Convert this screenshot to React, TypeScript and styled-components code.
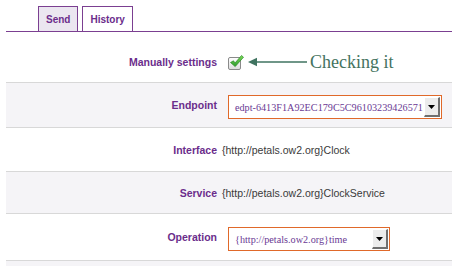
import React from 'react';
import styled, { createGlobalStyle } from 'styled-components';

const GlobalStyle = createGlobalStyle`
  html, body {
    margin: 0;
    padding: 0;
    background: #ffffff;
  }
  body {
    font-family: "Liberation Sans", Arial, sans-serif;
  }
`;

const PURPLE = '#6b2d8b';

const Page = styled.div`
  box-sizing: border-box;
  padding-left: 6px;
  width: 452px;
  height: 266px;
  overflow: hidden;
`;

const TabBar = styled.div`
  display: flex;
  align-items: flex-end;
  gap: 4px;
  height: 31px;
  padding-left: 32px;
  border-bottom: 1px solid #7b3f91;
`;

interface TabProps {
  active?: boolean;
}

const Tab = styled.div<TabProps>`
  box-sizing: border-box;
  height: 25px;
  padding: 0 7px;
  display: flex;
  align-items: center;
  border: 1px solid #7b3f91;
  border-bottom: none;
  background: ${(p) => (p.active ? '#ebe6f0' : '#ffffff')};
  color: ${PURPLE};
  font-size: 10px;
  font-weight: bold;
`;

interface RowProps {
  shaded?: boolean;
  height: number;
  padTop?: number;
}

const Row = styled.div<RowProps>`
  box-sizing: border-box;
  display: grid;
  grid-template-columns: 211px 1fr;
  column-gap: 5px;
  align-items: center;
  height: ${(p) => p.height}px;
  padding-top: ${(p) => p.padTop ?? 0}px;
  background: ${(p) => (p.shaded ? '#f5f4f7' : '#ffffff')};
  border-bottom: 1px solid #d8d8d8;
`;

const Label = styled.div`
  align-self: center;
  text-align: right;
  color: ${PURPLE};
  font-size: 10.5px;
  font-weight: bold;
`;

const Value = styled.div`
  display: flex;
  align-items: center;
  color: #3a3a3a;
  font-size: 10.5px;
  white-space: nowrap;
`;

interface SelectProps {
  width: number;
}

const FakeSelect = styled.div<SelectProps>`
  box-sizing: border-box;
  margin-left: 6px;
  margin-top: 4px;
  width: ${(p) => p.width}px;
  height: 24px;
  display: flex;
  align-items: center;
  justify-content: space-between;
  padding: 0 1px 0 6px;
  border: 1px solid #e0692a;
  background: #ffffff;
  color: #6a3a94;
  font-family: "Liberation Serif", "Times New Roman", serif;
  font-size: 10.2px;
  white-space: nowrap;
  overflow: hidden;
`;

const SelectButton = styled.span`
  box-sizing: border-box;
  flex-shrink: 0;
  width: 16px;
  height: 20px;
  display: flex;
  align-items: center;
  justify-content: center;
  background: #ececec;
  border-top: 1px solid #ffffff;
  border-left: 1px solid #ffffff;
  border-right: 2px solid #6f6f6f;
  border-bottom: 2px solid #6f6f6f;
`;

const Note = styled.span`
  margin-left: 2px;
  color: #44735f;
  font-family: "Liberation Serif", "Times New Roman", serif;
  font-size: 18px;
`;

function CheckIcon() {
  return (
    <svg width="18" height="18" viewBox="0 0 18 18">
      <defs>
        <linearGradient id="box" x1="0" y1="0" x2="0" y2="1">
          <stop offset="0" stopColor="#ffffff" />
          <stop offset="1" stopColor="#dcdcdc" />
        </linearGradient>
        <linearGradient id="tick" x1="0" y1="0" x2="0" y2="1">
          <stop offset="0" stopColor="#7fdc5a" />
          <stop offset="1" stopColor="#2c9a2a" />
        </linearGradient>
      </defs>
      <rect x="1.5" y="4.5" width="12" height="12" rx="1.5" fill="url(#box)" stroke="#8a8a8a" />
      <path
        d="M3.5 9.5 L6.5 7.8 L8 10 L14.5 2.5 L16.5 4.2 L8.2 13.6 Z"
        fill="url(#tick)"
        stroke="#2a8a28"
        strokeWidth="0.7"
        strokeLinejoin="round"
      />
    </svg>
  );
}

function Arrow() {
  return (
    <svg width="60" height="10" viewBox="0 0 60 10" style={{ marginLeft: 3 }}>
      <line x1="6" y1="5" x2="59" y2="5" stroke="#3f7360" strokeWidth="1.3" />
      <path d="M0 5 L9 0.8 L9 9.2 Z" fill="#3f7360" />
    </svg>
  );
}

function DropArrow() {
  return (
    <svg width="7" height="4" viewBox="0 0 7 4">
      <path d="M0 0 H7 L3.5 4 Z" fill="#000000" />
    </svg>
  );
}

export default function App() {
  return (
    <Page>
      <GlobalStyle />
      <TabBar>
        <Tab active>Send</Tab>
        <Tab>History</Tab>
      </TabBar>
      <Row height={51} padTop={10}>
        <Label>Manually settings</Label>
        <Value style={{ marginLeft: 5 }}>
          <CheckIcon />
          <Arrow />
          <Note>Checking it</Note>
        </Value>
      </Row>
      <Row shaded height={45}>
        <Label>Endpoint</Label>
        <Value>
          <FakeSelect width={214}>
            <span>edpt-6413F1A92EC179C5C96103239426571</span>
            <SelectButton>
              <DropArrow />
            </SelectButton>
          </FakeSelect>
        </Value>
      </Row>
      <Row height={44}>
        <Label>Interface</Label>
        <Value>{'{http://petals.ow2.org}Clock'}</Value>
      </Row>
      <Row shaded height={42}>
        <Label>Service</Label>
        <Value>{'{http://petals.ow2.org}ClockService'}</Value>
      </Row>
      <Row height={47}>
        <Label>Operation</Label>
        <Value>
          <FakeSelect width={162}>
            <span>{'{http://petals.ow2.org}time'}</span>
            <SelectButton>
              <DropArrow />
            </SelectButton>
          </FakeSelect>
        </Value>
      </Row>
      <Row shaded height={10} />
    </Page>
  );
}
